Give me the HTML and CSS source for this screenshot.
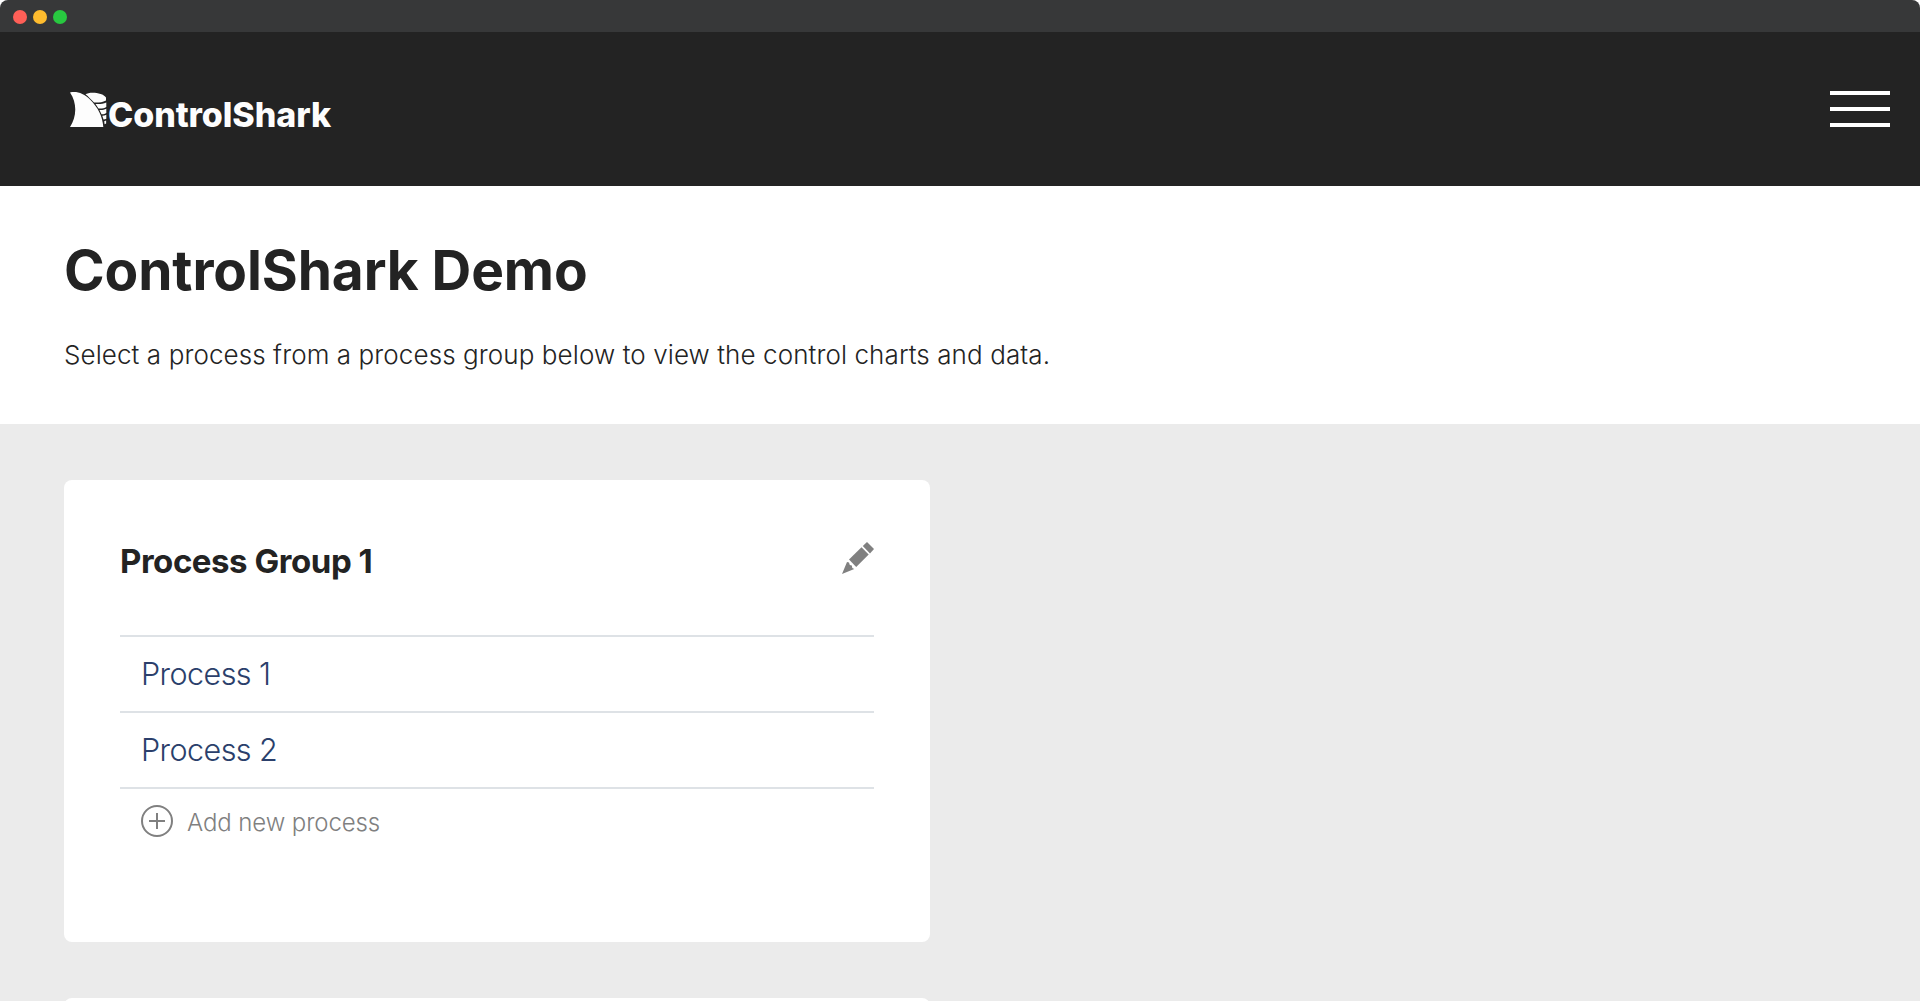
FILE: index.html
```html
<!DOCTYPE html>
<html lang="en">
<head>
<meta charset="utf-8">
<title>ControlShark Demo</title>
<link rel="stylesheet" href="styles.css">
</head>
<body>
<div class="window">
  <div class="titlebar">
    <span class="dot dot-close"></span>
    <span class="dot dot-min"></span>
    <span class="dot dot-max"></span>
  </div>
  <header class="header">
    <a class="logo">
      <svg class="logo-mark" width="38" height="35" viewBox="0 0 38 35" fill="#fdfdfd">
        <path d="M0 .5C7-1 14 1.500 20 7.500c8 8 12.500 16.500 13.300 27.500H0C6.500 25 7.500 11.500 0 .5z"/>
        <path d="M15.500 2.200C19-.5 33 .2 36 5.500v3c-4 2-8 2.200-12 2C21 7.500 18.500 4.500 15.500 2.200z"/>
        <path d="M25.500 12c4 .3 7.500 0 10.800-1.500V15c-2 1.300-5 1.800-7.800 1.500z"/>
        <path d="M29.500 18c2.500.2 4.800-.2 6.800-1.300V21c-1.200.9-2.800 1.300-4.800 1.200z"/>
        <path d="M32.300 23.800c1.500 0 2.800-.4 4-1.100v4.100c-.8.500-1.600.8-2.800.8z"/>
        <path d="M34.200 29.200l1.900-.8v3.200l-1.500.6z"/>
      </svg>
      <span class="logo-text">ControlShark</span>
    </a>
    <div class="menu"><span class="bar"></span><span class="bar"></span><span class="bar"></span></div>
  </header>
  <section class="intro">
    <h1 class="title">ControlShark Demo</h1>
    <p class="subtitle">Select a process from a process group below to view the control charts and data.</p>
  </section>
  <main class="groups">
    <article class="card">
      <div class="card-head">
        <h2 class="card-title">Process Group 1</h2>
        <svg class="pencil" width="32" height="32" viewBox="0 0 32 32" fill="#808080">
          <path d="M25 0l7 7-4 4.500L20.800 4z"/>
          <path d="M19.500 5.300l7.200 7.200-12.500 12.500L7 17.500z"/>
          <path d="M5 20l2 .5.8 2.500 2 .5.500 2.500 2 1L0 32z"/>
        </svg>
      </div>
      <ul class="list">
        <li class="row"><a class="link">Process 1</a></li>
        <li class="row"><a class="link">Process 2</a></li>
      </ul>
      <div class="add">
        <svg width="32" height="32" viewBox="0 0 32 32" fill="none" stroke="#808080" stroke-width="2">
          <circle cx="16" cy="16" r="15"/>
          <path d="M8 16h16M16 8v16"/>
        </svg>
        <span class="add-text">Add new process</span>
      </div>
    </article>
    <article class="card"></article>
  </main>
</div>
</body>
</html>
```
FILE: styles.css
```css
* { box-sizing: border-box; margin: 0; padding: 0; }
body { background: #fff; font-family: Inter, "Liberation Sans", sans-serif; color: #232323; }
.window { height: 1001px; overflow: hidden; border-radius: 8px 8px 0 0; display: flex; flex-direction: column; background: #ebebeb; }
.titlebar { height: 32px; flex: none; background: #373839; display: flex; align-items: center; gap: 6px; padding: 2px 13px 0; }
.dot { width: 14px; height: 14px; border-radius: 50%; }
.dot-close { background: #ff5f57; }
.dot-min { background: #febc2e; }
.dot-max { background: #28c840; }
.header { height: 154px; flex: none; background: #232323; display: flex; justify-content: space-between; align-items: center; padding: 0 30px 0 70px; }
.logo { display: flex; align-items: flex-end; color: #fdfdfd; }
.logo-text { font-size: 34px; font-weight: 800; line-height: 24px; letter-spacing: -0.08px; }
.menu { width: 60px; display: flex; flex-direction: column; gap: 12px; }
.bar { height: 4px; background: #fff; }
.intro { height: 238px; flex: none; background: #fff; padding: 52px 64px 0; }
.title { font-size: 55px; font-weight: 700; line-height: 64px; letter-spacing: -0.1px; white-space: nowrap; }
.subtitle { margin-top: 33px; font-size: 26px; font-weight: 300; line-height: 40px; letter-spacing: 0.09px; white-space: nowrap; }
.groups { padding: 56px 64px 0; display: flex; flex-direction: column; gap: 56px; align-items: flex-start; }
.card { width: 866px; height: 462px; flex: none; background: #fff; border-radius: 8px; padding: 56px; }
.card-head { height: 99px; display: flex; justify-content: space-between; align-items: flex-start; }
.card-title { margin-top: 5px; font-size: 33px; font-weight: 700; line-height: 40px; letter-spacing: -0.45px; white-space: nowrap; }
.pencil { margin-top: 6px; }
.list { list-style: none; border-top: 2px solid #dee2e6; }
.row { height: 76px; border-bottom: 2px solid #dee2e6; padding: 0 0 2px 21px; display: flex; align-items: center; }
.link { font-size: 30.5px; font-weight: 300; letter-spacing: -0.55px; color: #2b3f6b; }
.add { margin: 16px 0 0 21px; display: flex; align-items: center; gap: 14px; color: #808080; }
.add-text { font-size: 24px; font-weight: 300; line-height: 32px; letter-spacing: -0.1px; padding-top: 2px; margin-bottom: -2px; }
```
